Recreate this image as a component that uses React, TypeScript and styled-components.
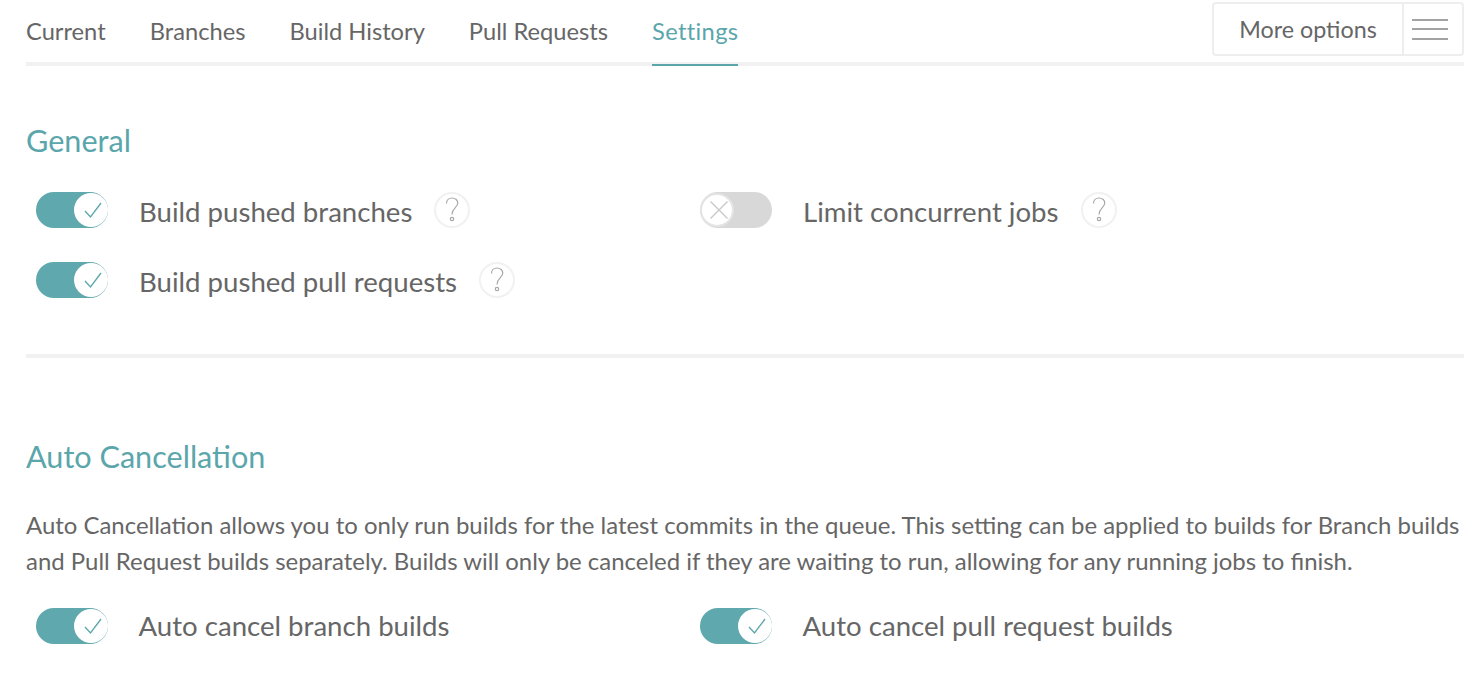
import React from "react";
import styled, { createGlobalStyle } from "styled-components";

const Global = createGlobalStyle`
  html, body { margin: 0; padding: 0; background: #fff; }
  body { font-family: "Lato", "Noto Sans", "Liberation Sans", sans-serif; color: #666; }
`;

const Page = styled.div`
  width: 1472px;
  height: 694px;
  overflow: hidden;
  box-sizing: border-box;
  padding: 0 8px 0 26px;
`;

const TabBar = styled.nav`
  display: flex;
  align-items: flex-start;
  justify-content: space-between;
  height: 62px;
  border-bottom: 4px solid #f1f1f1;
`;

const Tabs = styled.div`
  display: flex;
  gap: 44px;
`;

const Tab = styled.a<{ $active?: boolean }>`
  display: block;
  height: 64px;
  line-height: 62px;
  font-size: 23.7px;
  letter-spacing: ${(p) => (p.$active ? "0.35px" : "0")};
  color: ${(p) => (p.$active ? "#5aa6ab" : "#666")};
  border-bottom: 2px solid ${(p) => (p.$active ? "#5aa6ab" : "transparent")};
`;

const MoreButton = styled.div`
  display: flex;
  box-sizing: border-box;
  width: 252px;
  height: 54px;
  margin-top: 2px;
  border: 2px solid #eee;
  border-radius: 4px;
`;

const MoreLabel = styled.div`
  flex: 1;
  text-align: center;
  line-height: 51px;
  font-size: 23.3px;
  color: #666;
`;

const Burger = styled.div`
  box-sizing: border-box;
  width: 60px;
  padding-left: 8px;
  border-left: 2px solid #eee;
  display: flex;
  flex-direction: column;
  align-items: flex-start;
  justify-content: center;
  gap: 7.5px;
`;

const BurgerLine = styled.span`
  width: 36px;
  height: 2px;
  background: #a3a3a3;
`;

const SectionTitle = styled.h2`
  margin: 0;
  font-weight: 400;
  font-size: 30.6px;
  line-height: 40px;
  color: #5aa6ab;
`;

const General = styled.section`
  padding-top: 55px;
  padding-bottom: 56px;
  border-bottom: 4px solid #f1f1f1;
`;

const Auto = styled.section`
  padding-top: 79px;
`;

const SettingsGrid = styled.div`
  display: grid;
  grid-template-columns: 664px 1fr;
  row-gap: 34px;
  padding-left: 10px;
`;

const GeneralGrid = styled(SettingsGrid)`
  margin-top: 31px;
`;

const AutoGrid = styled(SettingsGrid)`
  margin-top: 29px;
`;

const Setting = styled.div`
  display: flex;
  align-items: center;
  height: 36px;
`;

const Label = styled.span<{ $drop?: boolean }>`
  margin-left: ${(p) => (p.$drop ? "31px" : "30.5px")};
  padding-top: ${(p) => (p.$drop ? "4px" : "0")};
  font-size: 27.6px;
  line-height: 36px;
  color: #666;
  white-space: nowrap;
`;

const Track = styled.div<{ $on: boolean }>`
  position: relative;
  flex: none;
  width: 72px;
  height: 36px;
  border-radius: 18px;
  background: ${(p) => (p.$on ? "#5fa8ad" : "#d8d8d8")};
`;

const Knob = styled.div<{ $on: boolean }>`
  position: absolute;
  top: 1px;
  ${(p) => (p.$on ? "right: 0;" : "left: 0;")}
  box-sizing: border-box;
  width: 34px;
  height: 34px;
  border-radius: 50%;
  background: #fff;
  ${(p) => (p.$on ? "" : "border: 2px solid #e4e4e4;")}
  display: flex;
  align-items: center;
  justify-content: center;
  padding-left: 3px;
`;

const Help = styled.span`
  flex: none;
  box-sizing: border-box;
  margin-left: 22px;
  width: 36px;
  height: 36px;
  border-radius: 50%;
  border: 2px solid #f1f1f1;
  display: flex;
  align-items: center;
  justify-content: center;
`;

const Description = styled.p`
  margin: 30px 0 0;
  font-size: 23.95px;
  line-height: 36px;
  color: #666;
  white-space: nowrap;
`;

const Toggle = ({ on }: { on: boolean }) => (
  <Track $on={on}>
    <Knob $on={on}>
      {on ? (
        <svg width="20" height="20" viewBox="0 0 20 20" fill="none" stroke="#5fa8ad" strokeWidth="1.4">
          <path d="M2 11 L7.5 17 L18 3" />
        </svg>
      ) : (
        <svg width="20" height="20" viewBox="0 0 20 20" fill="none" stroke="#c9c9c9" strokeWidth="1.4">
          <path d="M1.5 1.5 L18.5 18.5 M18.5 1.5 L1.5 18.5" />
        </svg>
      )}
    </Knob>
  </Track>
);

const HelpIcon = () => (
  <Help aria-label="help">
    <svg width="14" height="26" viewBox="0 0 14 26" fill="none" stroke="#a8a8a8" strokeWidth="1.2">
      <path d="M1.5 6.5 C1.5 3 4 1 7 1 C10.5 1 12.8 3.2 12.8 6 C12.8 10.5 7 11 7 17.5" />
      <circle cx="7" cy="22" r="1.7" />
    </svg>
  </Help>
);

const Item = ({ on, label, help }: { on: boolean; label: string; help?: boolean }) => (
  <Setting>
    <Toggle on={on} />
    <Label $drop={help}>{label}</Label>
    {help && <HelpIcon />}
  </Setting>
);

export default function App() {
  return (
    <Page>
      <Global />
      <TabBar>
        <Tabs>
          <Tab>Current</Tab>
          <Tab>Branches</Tab>
          <Tab>Build History</Tab>
          <Tab>Pull Requests</Tab>
          <Tab $active>Settings</Tab>
        </Tabs>
        <MoreButton>
          <MoreLabel>More options</MoreLabel>
          <Burger>
            <BurgerLine />
            <BurgerLine />
            <BurgerLine />
          </Burger>
        </MoreButton>
      </TabBar>
      <General>
        <SectionTitle>General</SectionTitle>
        <GeneralGrid>
          <Item on label="Build pushed branches" help />
          <Item on={false} label="Limit concurrent jobs" help />
          <Item on label="Build pushed pull requests" help />
        </GeneralGrid>
      </General>
      <Auto>
        <SectionTitle>Auto Cancellation</SectionTitle>
        <Description>
          Auto Cancellation allows you to only run builds for the latest commits in the queue. This setting can be applied to builds for Branch builds
          <br />
          and Pull Request builds separately. Builds will only be canceled if they are waiting to run, allowing for any running jobs to finish.
        </Description>
        <AutoGrid>
          <Item on label="Auto cancel branch builds" />
          <Item on label="Auto cancel pull request builds" />
        </AutoGrid>
      </Auto>
    </Page>
  );
}
